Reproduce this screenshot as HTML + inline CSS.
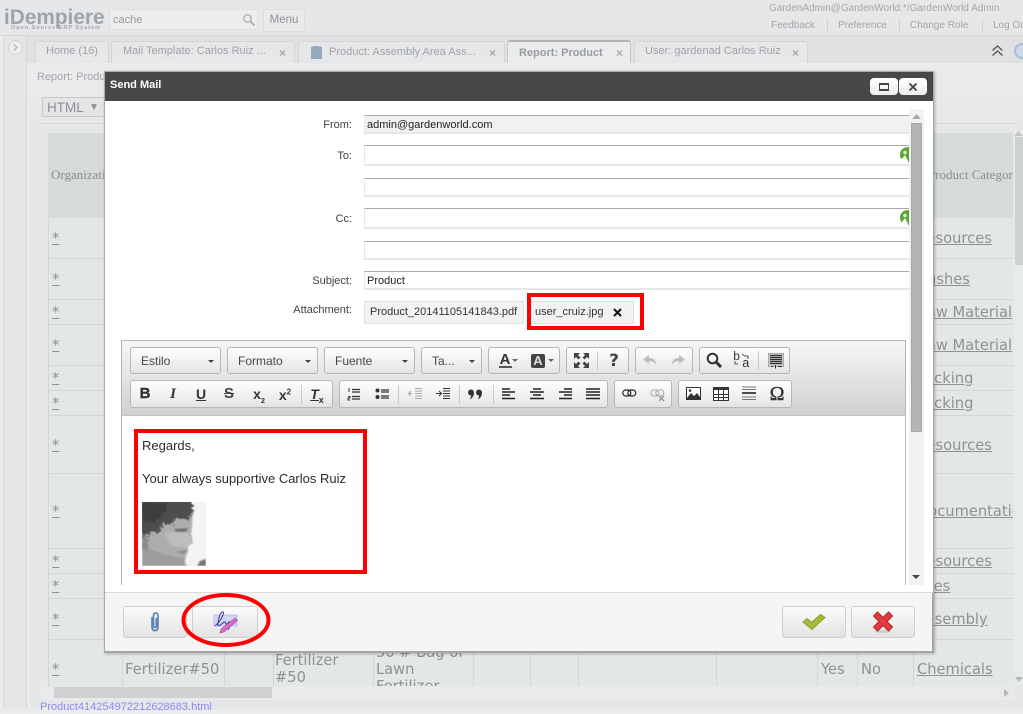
<!DOCTYPE html>
<html><head><meta charset="utf-8"><title>Send Mail</title>
<style>
html,body{margin:0;padding:0}
body{width:1023px;height:709px;overflow:hidden;position:relative;background:#ebecee;font-family:"Liberation Sans",sans-serif}
div,span.t,a.t{position:absolute;white-space:nowrap;box-sizing:border-box}
.g{color:#a3a6a9;font-size:10px;line-height:13px}
.tab{top:41px;height:22px;background:#e6e7e9;border:1px solid #d3d5d7;border-bottom:0;border-radius:3px 3px 0 0;color:#a0a3a6;font-size:11px;line-height:18px}
.x{position:absolute;color:#a5a7aa;font-weight:bold;font-size:12px;line-height:14px}
.l{height:1px;left:48px;width:965px;background:#d3d6d7}
.v{top:640px;height:46px;width:1px;background:#d3d6d7}
.c{font-family:"DejaVu Sans",sans-serif;font-size:14.67px;line-height:17px;color:#8f9192}
.u{text-decoration:underline}
.lab{color:#404040;font-size:11px;line-height:14px;text-align:right;left:200px;width:152px}
.inp{left:364px;width:545px;background:#fff;border-top:1px solid #aaa;border-bottom:2px solid #e6e6e6;border-left:1px solid #e6e6e6;color:#222;font-size:11px;padding-left:2px}
.grp{border:1px solid #b6b6b6;border-radius:3px;background:linear-gradient(#fff,#e4e4e4)}
.cb{top:347px;height:27px;color:#474747;font-size:12px;line-height:27px;padding-left:10px}
.ar{position:absolute;top:12px;width:0;height:0;border:3px solid transparent;border-top:3px solid #444;border-bottom:0}
.sp{width:1px;background:#c8c8c8;height:19px}
.i{color:#333;font-weight:bold;font-size:14px;line-height:16px;text-align:center;width:20px}
.btn{top:606px;height:32px;border:1px solid #cfcfcf;border-radius:3px;background:linear-gradient(#fbfbfb,#e3e3e3)}
svg{position:absolute;overflow:visible}
.red{border:4px solid #f00}
</style></head><body>

<!-- header -->
<div style="left:0;top:0;width:1023px;height:36px;background:#e6e7e9;border-bottom:1px solid #d5d7d9"></div>
<div style="left:4px;top:6px;font-size:20.8px;font-weight:bold;line-height:24px;color:#a0a4a8">iDempiere</div>
<div style="left:11px;top:25px;font-size:5.5px;font-weight:bold;line-height:6px;letter-spacing:1px;color:#a0a4a8">Open Source ERP System</div>
<div style="left:109px;top:9px;width:149px;height:21px;background:#eceded;border:1px solid #dfe0e2;color:#96999c;font-size:11px;line-height:20px;padding-left:3px">cache</div>
<svg style="left:242px;top:13px" width="14" height="14" fill="none" stroke="#b1b3b5" stroke-width="1.500"><circle cx="5.500" cy="5.500" r="3.700"/><path d="M8.500 8.500L12.500 12.500" stroke-width="2"/></svg>
<div style="left:263px;top:9px;width:42px;height:23px;background:#e9eaec;border:1px solid #dcdde0;border-radius:3px;color:#8f9295;font-size:11.500px;line-height:21px;text-align:center">Menu</div>
<div class="g" style="left:769px;top:2px">GardenAdmin@GardenWorld.*/GardenWorld Admin</div>
<div class="g" style="left:771px;top:19px">Feedback</div>
<div class="g" style="left:838px;top:19px">Preference</div>
<div class="g" style="left:910px;top:19px">Change Role</div>
<div class="g" style="left:993px;top:19px">Log Out</div>
<div style="left:827px;top:19px;width:1px;height:13px;background:#cfd1d3"></div>
<div style="left:899px;top:19px;width:1px;height:13px;background:#cfd1d3"></div>
<div style="left:982px;top:19px;width:1px;height:13px;background:#cfd1d3"></div>

<!-- left strip -->
<div style="left:0;top:36px;width:4px;height:673px;background:#ebecee;border-right:1px solid #d8dadc"></div>
<div style="left:4px;top:36px;width:23px;height:673px;background:#e5e6e8;border-right:1px solid #d5d7d9"></div>
<div style="left:8px;top:40px;width:15px;height:15px;border-radius:50%;border:1px solid #cfd1d3;background:#eceded"></div>
<svg style="left:8px;top:40px" width="15" height="15" fill="none" stroke="#a5a7aa" stroke-width="1"><path d="M6 4.500L9 7.500L6 10.500"/></svg>

<!-- tabs -->
<div style="left:27px;top:36px;width:996px;height:27px;background:#dfe1e3"></div>
<div class="tab" style="left:35px;width:74px;padding-left:10px">Home (16)</div>
<div class="tab" style="left:111px;width:184px;padding-left:11px">Mail Template: Carlos Ruiz ...<span class="x" style="left:167px;top:4px">×</span></div>
<div class="tab" style="left:298px;width:207px;padding:1px 0 0 30px">Product: Assembly Area Ass...<span class="x" style="left:190px;top:4px">×</span></div>
<svg style="left:310px;top:45px" width="13" height="14"><path d="M1 2Q6.500 0 12 2V14H1Z" fill="#97a9bf"/></svg>
<div class="tab" style="left:507px;width:124px;top:40px;height:24px;background:#ebecee;border-color:#c4c6c8;border-top:2px solid #b0b2b4;font-weight:bold;padding:2px 0 0 11px;color:#9a9da0">Report: Product<span class="x" style="left:108px;top:4px">×</span></div>
<div class="tab" style="left:634px;width:174px;padding-left:10px">User: gardenad Carlos Ruiz<span class="x" style="left:157px;top:4px">×</span></div>
<svg style="left:991px;top:45px" width="13" height="12" fill="none" stroke="#555" stroke-width="1.300"><path d="M1.500 5.500L6.500 1L11.500 5.500M1.500 10.500L6.500 6L11.500 10.500"/></svg>
<div style="left:1014px;top:43px;width:16px;height:16px;border-radius:50%;border:2px solid #a9bcd6;background:#cdd8e8"></div>

<!-- report -->
<div style="left:30px;top:63px;width:993px;height:646px;background:linear-gradient(#ebecee,#e6e7e9 60px)"></div>
<div class="g" style="left:37px;top:71px;font-size:11px">Report: Product</div>
<div style="left:42px;top:97px;width:70px;height:20px;background:#e4e5e7;border:1px solid #c6c8ca;border-radius:2px;color:#8d9093;font-size:13.500px;line-height:19px;padding-left:4px">HTML <span style="font-size:10px;position:relative;top:-2px;left:2px">▼</span></div>
<div style="left:40px;top:123px;width:975px;height:1px;background:#d3d5d7"></div>

<div style="left:48px;top:133px;width:965px;height:553px;background:#e4e7e8;border-left:1px solid #d3d6d7"></div>
<div style="left:48px;top:133px;width:965px;height:85px;background:#d6dada"></div>
<div style="left:51px;top:167px;font-family:'Liberation Serif',serif;font-size:13px;line-height:15px;color:#8b8d8e">Organization</div>
<div style="left:928px;top:167px;width:85px;overflow:hidden;font-family:'Liberation Serif',serif;font-size:13px;line-height:15px;color:#8b8d8e">Product Category</div>

<div class="l" style="top:258px"></div><div class="l" style="top:299px"></div><div class="l" style="top:324px"></div><div class="l" style="top:365px"></div><div class="l" style="top:390px"></div><div class="l" style="top:415px"></div><div class="l" style="top:473px"></div><div class="l" style="top:548px"></div><div class="l" style="top:573px"></div><div class="l" style="top:598px"></div><div class="l" style="top:639px"></div>

<div class="c u" style="left:52px;top:230px">*</div><div class="c u" style="left:52px;top:271px">*</div><div class="c u" style="left:52px;top:304px">*</div><div class="c u" style="left:52px;top:337px">*</div><div class="c u" style="left:52px;top:370px">*</div><div class="c u" style="left:52px;top:395px">*</div><div class="c u" style="left:52px;top:437px">*</div><div class="c u" style="left:52px;top:503px">*</div><div class="c u" style="left:52px;top:553px">*</div><div class="c u" style="left:52px;top:578px">*</div><div class="c u" style="left:52px;top:611px">*</div><div class="c u" style="left:52px;top:661px">*</div>

<div class="c u" style="left:917px;top:230px">Resources</div>
<div class="c u" style="left:917px;top:271px">Bushes</div>
<div class="c u" style="left:917px;top:304px">Raw Material</div>
<div class="c u" style="left:917px;top:337px">Raw Material</div>
<div class="c u" style="left:917px;top:370px">Packing</div>
<div class="c u" style="left:917px;top:395px">Packing</div>
<div class="c u" style="left:917px;top:437px">Resources</div>
<div class="c u" style="left:917px;top:503px;width:96px;overflow:hidden">Documentation</div>
<div class="c u" style="left:917px;top:553px">Resources</div>
<div class="c u" style="left:917px;top:578px">Fees</div>
<div class="c u" style="left:917px;top:611px">Assembly</div>
<div class="c u" style="left:917px;top:661px">Chemicals</div>

<div class="v" style="left:122px"></div><div class="v" style="left:224px"></div><div class="v" style="left:273px"></div><div class="v" style="left:373px"></div><div class="v" style="left:473px"></div><div class="v" style="left:530px"></div><div class="v" style="left:578px"></div><div class="v" style="left:716px"></div><div class="v" style="left:817px"></div><div class="v" style="left:857px"></div><div class="v" style="left:913px"></div>
<div class="c" style="left:125px;top:661px">Fertilizer#50</div>
<div class="c" style="left:275px;top:652px">Fertilizer<br>#50</div>
<div style="left:376px;top:640px;width:96px;height:46px;overflow:hidden"><div class="c" style="left:0;top:4px">50 # Bag of<br>Lawn<br>Fertilizer</div></div>
<div class="c" style="left:821px;top:661px">Yes</div>
<div class="c" style="left:861px;top:661px">No</div>

<!-- report scrollbars -->
<div style="left:41px;top:686px;width:973px;height:14px;background:#e9eaec"></div>
<div style="left:54px;top:687px;width:218px;height:11px;background:#cfd1d1"></div>
<svg style="left:1003px;top:688px" width="8" height="10"><path d="M1 1L6 5L1 9Z" fill="#b5b7b8"/></svg>
<div style="left:1014px;top:130px;width:9px;height:556px;background:#e9eaec"></div>
<div style="left:1015px;top:137px;width:8px;height:128px;background:#cfd1d1"></div>
<svg style="left:1014px;top:130px" width="9" height="6"><path d="M0 6L4.500 1L9 6Z" fill="#c3c5c6"/></svg>
<svg style="left:1015px;top:677px" width="8" height="6"><path d="M0 0H8L4 5Z" fill="#b5b7b8"/></svg>
<div style="left:40px;top:701px;font-size:11px;line-height:13px;color:#8b8bf0">Product414254972212628683.html</div>

<!-- dialog -->
<div style="left:104px;top:71px;width:830px;height:582px;background:#f5f5f5;border:1px solid #a9abad;border-right:2px solid #a4a6a8;border-bottom:2px solid #a4a6a8;box-shadow:1px 1px 3px rgba(0,0,0,.25)"></div>
<div style="left:105px;top:72px;width:828px;height:29px;background:#484848;color:#fff;font-weight:bold;font-size:11px;line-height:27px;padding-left:5px">Send Mail</div>
<div style="left:870px;top:78px;width:28px;height:17px;border-radius:4px;background:linear-gradient(#fff,#ececec)"></div>
<div style="left:899px;top:78px;width:28px;height:17px;border-radius:4px;background:linear-gradient(#fff,#ececec)"></div>
<div style="left:879px;top:83px;width:10px;height:8px;border:1px solid #444;border-top:2px solid #444;border-bottom:2px solid #444"></div>
<svg style="left:908px;top:82px" width="10" height="10" stroke="#444" stroke-width="1.800"><path d="M1.500 1.500L8.500 8.500M8.500 1.500L1.500 8.500"/></svg>
<div style="left:105px;top:101px;width:828px;height:492px;background:#fff;border-bottom:1px solid #dcdcdc"></div>

<!-- form -->
<div class="lab" style="top:118px">From:</div>
<div class="lab" style="top:149px">To:</div>
<div class="lab" style="top:212px">Cc:</div>
<div class="lab" style="top:274px">Subject:</div>
<div class="lab" style="top:303px">Attachment:</div>
<div class="inp" style="top:115px;height:19px;background:#f1f1f1;line-height:18px">admin@gardenworld.com</div>
<div class="inp" style="top:145px;height:21px"></div>
<div class="inp" style="top:178px;height:19px"></div>
<div class="inp" style="top:208px;height:21px"></div>
<div class="inp" style="top:241px;height:19px"></div>
<div class="inp" style="top:271px;height:19px;line-height:19px">Product</div>
<svg style="left:899px;top:147px" width="10" height="16"><path d="M10 0C4 0 1 3 1 8C1 10 2 12 3 12L6 8L10 16Z" fill="#5aa82e"/><circle cx="6" cy="5.500" r="1.700" fill="#e8f4df"/></svg>
<svg style="left:899px;top:210px" width="10" height="16"><path d="M10 0C4 0 1 3 1 8C1 10 2 12 3 12L6 8L10 16Z" fill="#5aa82e"/><circle cx="6" cy="5.500" r="1.700" fill="#e8f4df"/></svg>
<div style="left:364px;top:301px;width:160px;height:23px;background:#f2f2f2;border:1px solid #e2e2e2;color:#333;font-size:11px;line-height:21px;padding-left:5px">Product_20141105141843.pdf</div>
<div style="left:530px;top:301px;width:104px;height:23px;background:#f2f2f2;border:1px solid #e2e2e2;color:#333;font-size:11px;line-height:21px;padding-left:4px">user_cruiz.jpg</div>
<svg style="left:613px;top:308px" width="9" height="9" stroke="#111" stroke-width="2"><path d="M1 1L8 8M8 1L1 8"/></svg>
<div class="red" style="left:527px;top:293px;width:117px;height:37px"></div>

<!-- dialog scrollbar -->
<div style="left:909px;top:109px;width:15px;height:476px;background:#f2f2f2"></div>
<div style="left:911px;top:123px;width:11px;height:309px;background:#b5b5b5;border:1px solid #a8a8a8"></div>
<svg style="left:912px;top:114px" width="9" height="6"><path d="M0 5L4.500 0L9 5Z" fill="#aaa"/></svg>
<svg style="left:912px;top:575px" width="9" height="6"><path d="M0 0H8L4 4Z" fill="#444"/></svg>

<!-- editor -->
<div style="left:121px;top:340px;width:785px;height:245px;background:#fff;border:1px solid #b6b6b6;border-bottom:0"></div>
<div style="left:122px;top:341px;width:783px;height:75px;background:linear-gradient(#f6f6f6,#cfd1cf);border-bottom:1px solid #c3c3c3"></div>

<div class="grp cb" style="left:130px;width:91px">Estilo<span class="ar" style="left:77px"></span></div>
<div class="grp cb" style="left:227px;width:91px">Formato<span class="ar" style="left:77px"></span></div>
<div class="grp cb" style="left:324px;width:91px">Fuente<span class="ar" style="left:77px"></span></div>
<div class="grp cb" style="left:421px;width:61px">Ta...<span class="ar" style="left:47px"></span></div>
<div class="grp" style="left:488px;top:347px;width:72px;height:27px"></div>
<div class="grp" style="left:566px;top:347px;width:63px;height:27px"></div>
<div class="grp" style="left:635px;top:347px;width:58px;height:27px"></div>
<div class="grp" style="left:699px;top:347px;width:91px;height:27px"></div>
<div class="grp" style="left:130px;top:380px;width:203px;height:28px"></div>
<div class="grp" style="left:339px;top:380px;width:269px;height:28px"></div>
<div class="grp" style="left:614px;top:380px;width:58px;height:28px"></div>
<div class="grp" style="left:678px;top:380px;width:114px;height:28px"></div>

<div class="sp" style="left:597px;top:351px"></div><div class="sp" style="left:758px;top:351px"></div>
<div class="sp" style="left:301px;top:385px"></div><div class="sp" style="left:398px;top:385px"></div><div class="sp" style="left:459px;top:385px"></div><div class="sp" style="left:493px;top:385px"></div>

<!-- row 1 icons -->
<div class="i" style="left:495px;top:352px;font-size:15px">A</div>
<div style="left:499px;top:366px;width:13px;height:2px;background:#555"></div>
<svg style="left:512px;top:359px" width="6" height="4"><path d="M0 0H6L3 3Z" fill="#666"/></svg>
<div style="left:531px;top:354px;width:14px;height:14px;background:#444;border-radius:2px;color:#ddd;font-size:13px;font-weight:bold;line-height:14px;text-align:center">A</div>
<svg style="left:548px;top:359px" width="6" height="4"><path d="M0 0H6L3 3Z" fill="#666"/></svg>
<svg style="left:574px;top:353px" width="15" height="15" fill="#444"><path d="M0 0H6L4 2L6.500 4.500L4.500 6.500L2 4L0 6ZM15 0V6L13 4L10.500 6.500L8.500 4.500L11 2L9 0ZM0 15V9L2 11L4.500 8.500L6.500 10.500L4 13L6 15ZM15 15H9L11 13L8.500 10.500L10.500 8.500L13 11L15 9Z"/></svg>
<div class="i" style="left:604px;top:352px;font-size:17px;line-height:18px;font-family:'DejaVu Sans',sans-serif;color:#444">?</div>
<svg style="left:643px;top:354px" width="14" height="12" fill="#bbb"><path d="M6 1V4Q13 4 13 11Q11 7 6 7V10L0 5.500Z"/></svg>
<svg style="left:671px;top:354px" width="14" height="12" fill="#bbb"><path d="M8 1V4Q1 4 1 11Q3 7 8 7V10L14 5.500Z"/></svg>
<svg style="left:706px;top:352px" width="16" height="16" fill="none" stroke="#333"><circle cx="6.500" cy="6.500" r="4.800" stroke-width="2"/><path d="M10 10L15 15" stroke-width="3"/></svg>
<div style="left:733px;top:352px;font-size:12px;font-family:'Liberation Mono',monospace;color:#333;line-height:10px">b</div>
<div style="left:742px;top:359px;font-size:13px;font-family:'Liberation Mono',monospace;color:#333;line-height:10px">a</div>
<svg style="left:733px;top:353px" width="18" height="16" fill="none" stroke="#555"><path d="M9 1L12 3H15V6M2 8V11H5M3 9"/></svg>
<svg style="left:768px;top:353px" width="16" height="16" stroke="#333"><rect x="0.500" y="0.500" width="15" height="13" fill="#ccc" stroke="#aaa"/><path d="M2 2.500H14M2 4.500H14M2 6.500H14M2 8.500H14M2 10.500H14" stroke-width="1.200"/><path d="M3 13.500H5M10 13.500H14M7.500 12V15.500"/></svg>

<!-- row 2 icons -->
<div class="i" style="left:135px;top:386px;font-size:15px;-webkit-text-stroke:.4px #333">B</div>
<div class="i" style="left:163px;top:386px;font-size:15px;font-style:italic;font-family:'Liberation Serif',serif">I</div>
<div class="i" style="left:191px;top:386px;font-size:14px;text-decoration:underline">U</div>
<div class="i" style="left:219px;top:386px;font-size:15px;text-decoration:line-through;color:#444">S</div>
<div class="i" style="left:249px;top:386px">x<sub style="font-size:7px;line-height:0">2</sub></div>
<div class="i" style="left:275px;top:387px">x<sup style="font-size:8px;line-height:0">2</sup></div>
<div class="i" style="left:307px;top:386px;font-style:italic;font-size:14px;text-decoration:underline">T<sub style="font-size:9px;line-height:0;font-style:normal">x</sub></div>
<svg style="left:347px;top:387px" width="14" height="14" fill="none" stroke="#333"><path d="M5 2.500H13M5 5H13" stroke-width="1.200"/><path d="M5 9.500H13M5 12H13" stroke-width="1.200"/><path d="M2 1V5M1 9.500H3V11H1V13H3" stroke-width="1"/></svg>
<svg style="left:375px;top:388px" width="14" height="12"><circle cx="2.500" cy="2.500" r="2" fill="#333"/><circle cx="2.500" cy="9" r="2" fill="#333"/><path d="M6 2H14M6 4H14M6 8H14M6 10H14" stroke="#333" stroke-width="1.200"/></svg>
<svg style="left:408px;top:387px" width="14" height="13" fill="none" stroke="#aaa"><path d="M7 1.500H14M7 4H14M7 6.500H14M7 9H14M7 11.500H14M0 6.500H4M3 4L0.500 6.500L3 9"/></svg>
<svg style="left:436px;top:387px" width="14" height="13" fill="none" stroke="#333"><path d="M7 1.500H14M7 4H14M7 6.500H14M7 9H14M7 11.500H14M0 6.500H5M3 4L5.500 6.500L3 9"/></svg>
<svg style="left:468px;top:389px" width="15" height="11" fill="#333"><circle cx="3" cy="3.500" r="3"/><circle cx="11" cy="3.500" r="3"/><path d="M3.500 5.500L6 4Q6 8 2 10.500ZM11.500 5.500L14 4Q14 8 10 10.500Z"/></svg>
<svg style="left:502px;top:388px" width="14" height="12" stroke="#222" stroke-width="1.400"><path d="M0 1H8M0 4H13M0 7H8M0 10.500H13"/></svg>
<svg style="left:530px;top:388px" width="14" height="12" stroke="#222" stroke-width="1.400"><path d="M3 1H11M0 4H14M3 7H11M0 10.500H14"/></svg>
<svg style="left:558px;top:388px" width="14" height="12" stroke="#222" stroke-width="1.400"><path d="M6 1H14M1 4H14M6 7H14M1 10.500H14"/></svg>
<svg style="left:586px;top:388px" width="14" height="12" stroke="#222" stroke-width="1.400"><path d="M0 1H14M0 4H14M0 7H14M0 10.500H14"/></svg>
<svg style="left:622px;top:389px" width="15" height="9" fill="none" stroke="#222" stroke-width="1.200"><rect x="0.800" y="1" width="8" height="6" rx="3"/><rect x="5.800" y="1" width="8" height="6" rx="3"/></svg>
<svg style="left:650px;top:389px" width="15" height="13" fill="none" stroke="#aaa" stroke-width="1.100"><rect x="0.800" y="1" width="8" height="6" rx="3"/><rect x="5.800" y="1" width="8" height="6" rx="3"/><path d="M9 7L14 12M14 7L9 12" stroke="#999" stroke-width="1.300"/></svg>
<svg style="left:686px;top:387px" width="15" height="13"><rect x="0.500" y="0.500" width="14" height="12" fill="#fff" stroke="#333"/><path d="M1 11L5 6L8 9L11 6L14 10V12H1Z" fill="#333"/><circle cx="4" cy="3.500" r="1.300" fill="#333"/></svg>
<svg style="left:713px;top:387px" width="16" height="14" fill="#fff" stroke="#333"><rect x="0.500" y="0.500" width="15" height="13"/><path d="M0 1.500H16" stroke-width="3"/><path d="M0.500 7.500H15.500M0.500 10.500H15.500M5.500 3V14M10.500 3V14"/></svg>
<svg style="left:742px;top:386px" width="14" height="15" stroke="#777"><path d="M0 1H14M0 3.500H14M0 11H14M0 13.500H14"/><path d="M0 7H14" stroke="#222" stroke-width="1.600"/></svg>
<div class="i" style="left:767px;top:384px;font-family:'Liberation Serif',serif;font-size:20px;line-height:20px;font-weight:normal;-webkit-text-stroke:.4px #333">Ω</div>

<!-- editor content -->
<div style="left:142px;top:438px;color:#2b2b2b;font-size:13px;line-height:15px">Regards,</div>
<div style="left:142px;top:471px;color:#2b2b2b;font-size:13px;line-height:15px">Your always supportive Carlos Ruiz</div>
<svg style="left:142px;top:502px" width="64" height="64" viewBox="0 0 64 64">
<defs><filter id="b" x="-10%" y="-10%" width="120%" height="120%"><feGaussianBlur stdDeviation=".7"/></filter>
<filter id="h" x="-20%" y="-20%" width="140%" height="140%"><feTurbulence type="fractalNoise" baseFrequency=".35" numOctaves="2" seed="4"/><feDisplacementMap in="SourceGraphic" scale="7"/><feGaussianBlur stdDeviation=".5"/></filter>
<clipPath id="cp"><rect width="64" height="64"/></clipPath></defs>
<rect width="64" height="64" fill="#f4f4f4"/>
<g clip-path="url(#cp)">
<g filter="url(#b)">
<path d="M0 0H46L51 8L50 24L49 32L51 41L46 44L46 50L44 54L43 60L45 64H0Z" fill="#adadad"/>
<path d="M22 30L46 30L50 41L44 46L30 44Z" fill="#bdbdbd"/>
<path d="M0 44L22 52L42 56L42 64H0Z" fill="#9d9d9d"/>
<path d="M32 27L46 26L44 30L34 30Z" fill="#6f6f6f"/>
<path d="M34 50L45 48L42 52Z" fill="#888"/>
<path d="M58 59L64 57V64H55Z" fill="#777"/>
</g>
<g filter="url(#h)">
<path d="M-3 -3H50L51 10L46 18L34 16L30 22L22 22L17 30L9 30L0 38Z" fill="#4e4e4e"/>
<path d="M0 0H26L22 12L12 20L2 20Z" fill="#3c3c3c"/>
<path d="M0 34L6 36L6 46L0 48Z" fill="#8a8a8a"/>
</g></g></svg>
<div class="red" style="left:134px;top:429px;width:233px;height:145px"></div>

<!-- footer buttons -->
<div class="btn" style="left:123px;width:64px"></div>
<div class="btn" style="left:192px;width:66px"></div>
<div class="btn" style="left:782px;width:64px"></div>
<div class="btn" style="left:851px;width:64px"></div>
<svg style="left:149px;top:612px" width="12" height="20" fill="none" stroke="#5b86b5" stroke-width="1.700"><path d="M3 5V15Q3 18.500 6 18.500Q9 18.500 9 15V4Q9 1 6.500 1Q4.500 1 4.500 4V14Q4.500 15.500 6 15.500Q7.300 15.500 7.300 14V6"/></svg>
<svg style="left:213px;top:611px" width="26" height="22" fill="none">
<path d="M1 4H24V15H1Z" fill="#d0d5f2" stroke="#bcc2e8"/>
<path d="M2 15C7 11 12 2 10 1C7 0 5 10 5 14C5 16 9 13 11 11C13 10 12 14 14 13C15 12 16 10 17 11C18 13 17 16 15 19M17 11C19 12 21 9 23 8" stroke="#3d3d9c" stroke-width="1"/>
<path d="M22 7L24.500 9.500L11 21L7 22L8 18Z" fill="#d66cc8" stroke="#a84aa0" stroke-width=".6"/>
</svg>
<svg style="left:802px;top:612px" width="24" height="20"><path d="M1 10L5 6.500L9.500 10.500L18.500 2.500L23 5.500L10 17.500Z" fill="#a9b838" stroke="#8e9c28"/></svg>
<svg style="left:872px;top:611px" width="22" height="22"><ellipse cx="11" cy="20.500" rx="8" ry="1.500" fill="#ccc"/><path d="M1.500 5L5.500 1L11 6.500L16.500 1L20.500 5L15 10.500L20.500 16L16.500 20L11 14.500L5.500 20L1.500 16L7 10.500Z" fill="#e23b3f" stroke="#b82226"/></svg>
<svg style="left:180px;top:591px" width="92" height="58"><ellipse cx="46" cy="29" rx="42.500" ry="25" fill="none" stroke="#f00" stroke-width="4"/></svg>
</body></html>
